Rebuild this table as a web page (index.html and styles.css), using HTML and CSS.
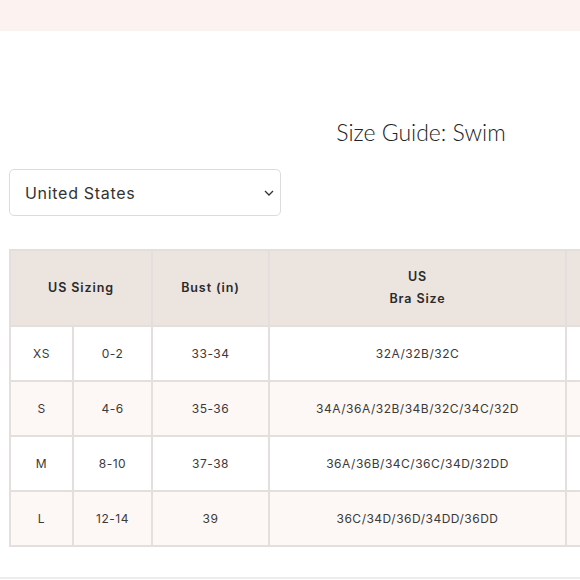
FILE: index.html
```html
<!DOCTYPE html>
<html>
<head>
<meta charset="utf-8">
<link rel="stylesheet" href="styles.css">
</head>
<body>
<div class="topbar"></div>
<div class="viewport">
<main class="page">
  <h1 class="title">Size Guide: Swim</h1>
  <div class="select">
    <span class="select-label">United States</span>
    <svg class="chevron" width="10" height="6" viewBox="0 0 10 6"><path d="M1 1l4 4 4-4" fill="none" stroke="#333" stroke-width="1.3"/></svg>
  </div>
  <table class="sizes">
    <colgroup>
      <col class="c1"><col class="c2"><col class="c3"><col class="c4"><col class="c5">
    </colgroup>
    <thead>
      <tr>
        <th colspan="2">US Sizing</th>
        <th>Bust (in)</th>
        <th>US<br>Bra Size</th>
        <th></th>
      </tr>
    </thead>
    <tbody>
      <tr><td>XS</td><td>0-2</td><td>33-34</td><td>32A/32B/32C</td><td></td></tr>
      <tr class="alt"><td>S</td><td>4-6</td><td>35-36</td><td>34A/36A/32B/34B/32C/34C/32D</td><td></td></tr>
      <tr><td>M</td><td>8-10</td><td>37-38</td><td>36A/36B/34C/36C/34D/32DD</td><td></td></tr>
      <tr class="alt"><td>L</td><td>12-14</td><td>39</td><td>36C/34D/36D/34DD/36DD</td><td></td></tr>
    </tbody>
  </table>
</main>
</div>
<div class="bottomline"></div>
</body>
</html>
```
FILE: styles.css
```css
html, body {
  margin: 0;
  padding: 0;
  background: #fff;
  overflow: hidden;
  width: 580px;
  height: 580px;
}
body {
  font-family: "Inter", "Liberation Sans", sans-serif;
  color: #333;
  position: relative;
}
.topbar {
  height: 29px;
  background: #fcf2ef;
  border-bottom: 2px solid #f9f3ef;
}
.viewport {
  width: 580px;
  overflow: hidden;
}
.page {
  width: 824px;
  padding: 0 9px;
}
.title {
  margin: 0;
  padding-top: 82px;
  height: 39px;
  text-align: center;
  font-family: "Lato", sans-serif;
  font-weight: 300;
  font-size: 23px;
  line-height: 39px;
  color: #222;
}
.select {
  margin-top: 17px;
  border: 1px solid #dcdcdc;
  border-radius: 5px;
  display: flex;
  align-items: center;
  justify-content: space-between;
  padding: 0 6px 0 15px;
  box-sizing: border-box;
  width: 272px;
  height: 47px;
}
.select-label {
  font-size: 16px;
  letter-spacing: 0.7px;
  color: #333;
}
.sizes {
  margin-top: 33px;
  border-collapse: collapse;
  table-layout: fixed;
  width: 824px;
}
.c1 { width: 63px; }
.c2 { width: 79px; }
.c3 { width: 117px; }
.c4 { width: 297px; }
.sizes th, .sizes td {
  border: 2px solid #e3dfdd;
  text-align: center;
  padding: 0;
}
.sizes th {
  background: #ece4df;
  height: 74px;
  font-size: 12.5px;
  font-weight: 600;
  line-height: 22px;
  color: #2a2a2a;
  letter-spacing: 0.9px;
}
.sizes td {
  height: 53px;
  font-size: 12px;
  color: #3a3a3a;
  letter-spacing: 0.5px;
}
.sizes tr.alt td {
  background: #fdf8f6;
}
.bottomline {
  position: absolute;
  left: 0;
  right: 0;
  top: 577px;
  height: 2px;
  background: #ececec;
}
```
